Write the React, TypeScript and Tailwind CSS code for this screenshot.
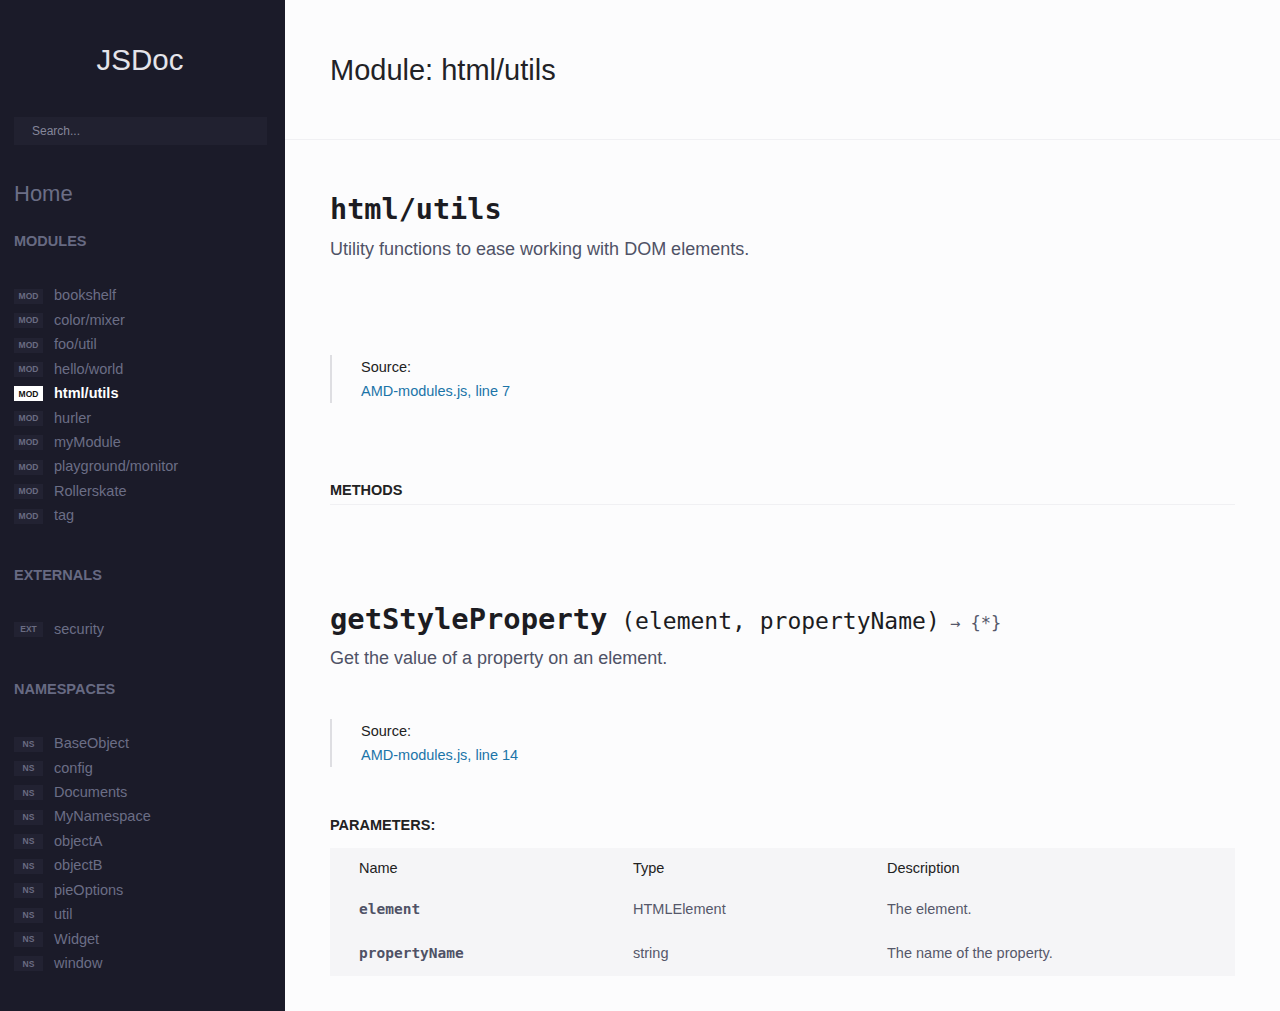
const modules = [
  "bookshelf",
  "color/mixer",
  "foo/util",
  "hello/world",
  "html/utils",
  "hurler",
  "myModule",
  "playground/monitor",
  "Rollerskate",
  "tag",
];

const externals = ["security"];

const namespaces = [
  "BaseObject",
  "config",
  "Documents",
  "MyNamespace",
  "objectA",
  "objectB",
  "pieOptions",
  "util",
  "Widget",
  "window",
];

const params = [
  { name: "element", type: "HTMLElement", desc: "The element." },
  { name: "propertyName", type: "string", desc: "The name of the property." },
];

function NavItem({ badge, label, active }: { badge: string; label: string; active?: boolean }) {
  return (
    <li className="flex items-center h-[24.44px]">
      <span
        className={
          active
            ? "w-[29px] h-[15px] flex items-center justify-center bg-white text-[#111] text-[8.5px] font-bold"
            : "w-[29px] h-[15px] flex items-center justify-center bg-[#222232] text-[#6a6c82] text-[8.5px] font-bold"
        }
      >
        {badge}
      </span>
      <span
        className={
          active
            ? "ml-[11px] text-[14.5px] text-white font-bold"
            : "ml-[11px] text-[14.5px] text-[#6b6e86]"
        }
      >
        {label}
      </span>
    </li>
  );
}

function SectionTitle({ children }: { children: string }) {
  return (
    <h3 className="px-[14px] text-[14.5px] leading-[20px] font-bold text-[#676a82] uppercase">{children}</h3>
  );
}

function Sidebar() {
  return (
    <aside className="w-[285px] shrink-0 bg-[#1b1b29] min-h-[1011px] pb-10">
      <div className="pt-[43px] pr-[5px] text-center text-[29.5px] leading-[34px] text-[#e4e4ea]">JSDoc</div>
      <div className="mt-[40px] ml-[14px] mr-[18px] h-[28px] bg-[#212130] flex items-center pl-[18px] text-[12px] text-[#85869a]">
        Search...
      </div>
      <div className="mt-[35px] px-[14px] text-[22px] leading-[28px] text-[#6b6e86]">Home</div>
      <div className="mt-[23px]">
        <SectionTitle>Modules</SectionTitle>
      </div>
      <ul className="mt-[33px] px-[14px]">
        {modules.map((m) => (
          <NavItem key={m} badge="MOD" label={m} active={m === "html/utils"} />
        ))}
      </ul>
      <div className="mt-[37px]">
        <SectionTitle>Externals</SectionTitle>
      </div>
      <ul className="mt-[32px] px-[14px]">
        {externals.map((m) => (
          <NavItem key={m} badge="EXT" label={m} />
        ))}
      </ul>
      <div className="mt-[37px]">
        <SectionTitle>Namespaces</SectionTitle>
      </div>
      <ul className="mt-[33px] px-[14px]">
        {namespaces.map((m) => (
          <NavItem key={m} badge="NS" label={m} />
        ))}
      </ul>
    </aside>
  );
}

function SourceBlock({ line }: { line: number }) {
  return (
    <div className="border-l-2 border-[#dedee2] pl-[29px] text-[14.5px] leading-[24px]">
      <div className="text-[#222]">Source:</div>
      <div className="text-[#1b74a8]">
        AMD-modules.js, <span>line {line}</span>
      </div>
    </div>
  );
}

export default function App() {
  return (
    <div className="flex min-h-screen font-['Liberation_Sans',Arial,sans-serif] bg-[#fcfcfd]">
      <Sidebar />
      <main className="flex-1 min-w-0">
        <header className="h-[140px] px-[45px] pt-[2px] flex items-center border-b border-[#f0f0f3]">
          <h1 className="text-[29px] text-[#222226]">Module: html/utils</h1>
        </header>
        <div className="px-[45px] pb-10">
          <h2 className="mt-[52px] font-['DejaVu_Sans_Mono',monospace] font-bold text-[28.5px] leading-[36px] text-[#1c1c22]">
            html/utils
          </h2>
          <p className="mt-[8px] text-[18px] leading-[26px] text-[#4f5266]">
            Utility functions to ease working with DOM elements.
          </p>
          <div className="mt-[93px]">
            <SourceBlock line={7} />
          </div>
          <h3 className="mt-[77px] pb-[4px] border-b border-[#f0f0f3] text-[14.5px] leading-[20px] font-bold text-[#222]">
            METHODS
          </h3>
          <h4 className="mt-[96px] font-['DejaVu_Sans_Mono',monospace] leading-[36px] text-[#1c1c22] flex items-baseline whitespace-pre">
            <span className="font-bold text-[28.8px]">getStyleProperty</span>
            <span className="text-[23px]"> (element, propertyName)</span>
            <span className="text-[17px] text-[#55586a]"> → {"{*}"}</span>
          </h4>
          <p className="mt-[4px] text-[18px] leading-[26px] text-[#4f5266]">
            Get the value of a property on an element.
          </p>
          <div className="mt-[48px]">
            <SourceBlock line={14} />
          </div>
          <h5 className="mt-[48px] text-[14.5px] leading-[20px] font-bold text-[#222]">PARAMETERS:</h5>
          <div className="mt-[13px] bg-[#f5f5f7] text-[14.5px]">
            <div className="grid grid-cols-[274px_254px_1fr] h-[40px] items-center text-[#222]">
              <div className="pl-[29px] pr-[28px] pt-[2px]">Name</div>
              <div className="pl-[29px] pr-[28px] pt-[2px]">Type</div>
              <div className="pl-[29px] pr-[28px] pt-[2px]">Description</div>
            </div>
            {params.map((p) => (
              <div key={p.name} className="grid grid-cols-[274px_254px_1fr] h-[44px] items-center">
                <div className="pl-[29px] pr-[28px] font-['DejaVu_Sans_Mono',monospace] font-bold text-[#4f5266]">
                  {p.name}
                </div>
                <div className="pl-[29px] pr-[28px] text-[#55586a]">{p.type}</div>
                <div className="pl-[29px] pr-[28px] text-[#55586a]">{p.desc}</div>
              </div>
            ))}
          </div>
        </div>
      </main>
    </div>
  );
}
